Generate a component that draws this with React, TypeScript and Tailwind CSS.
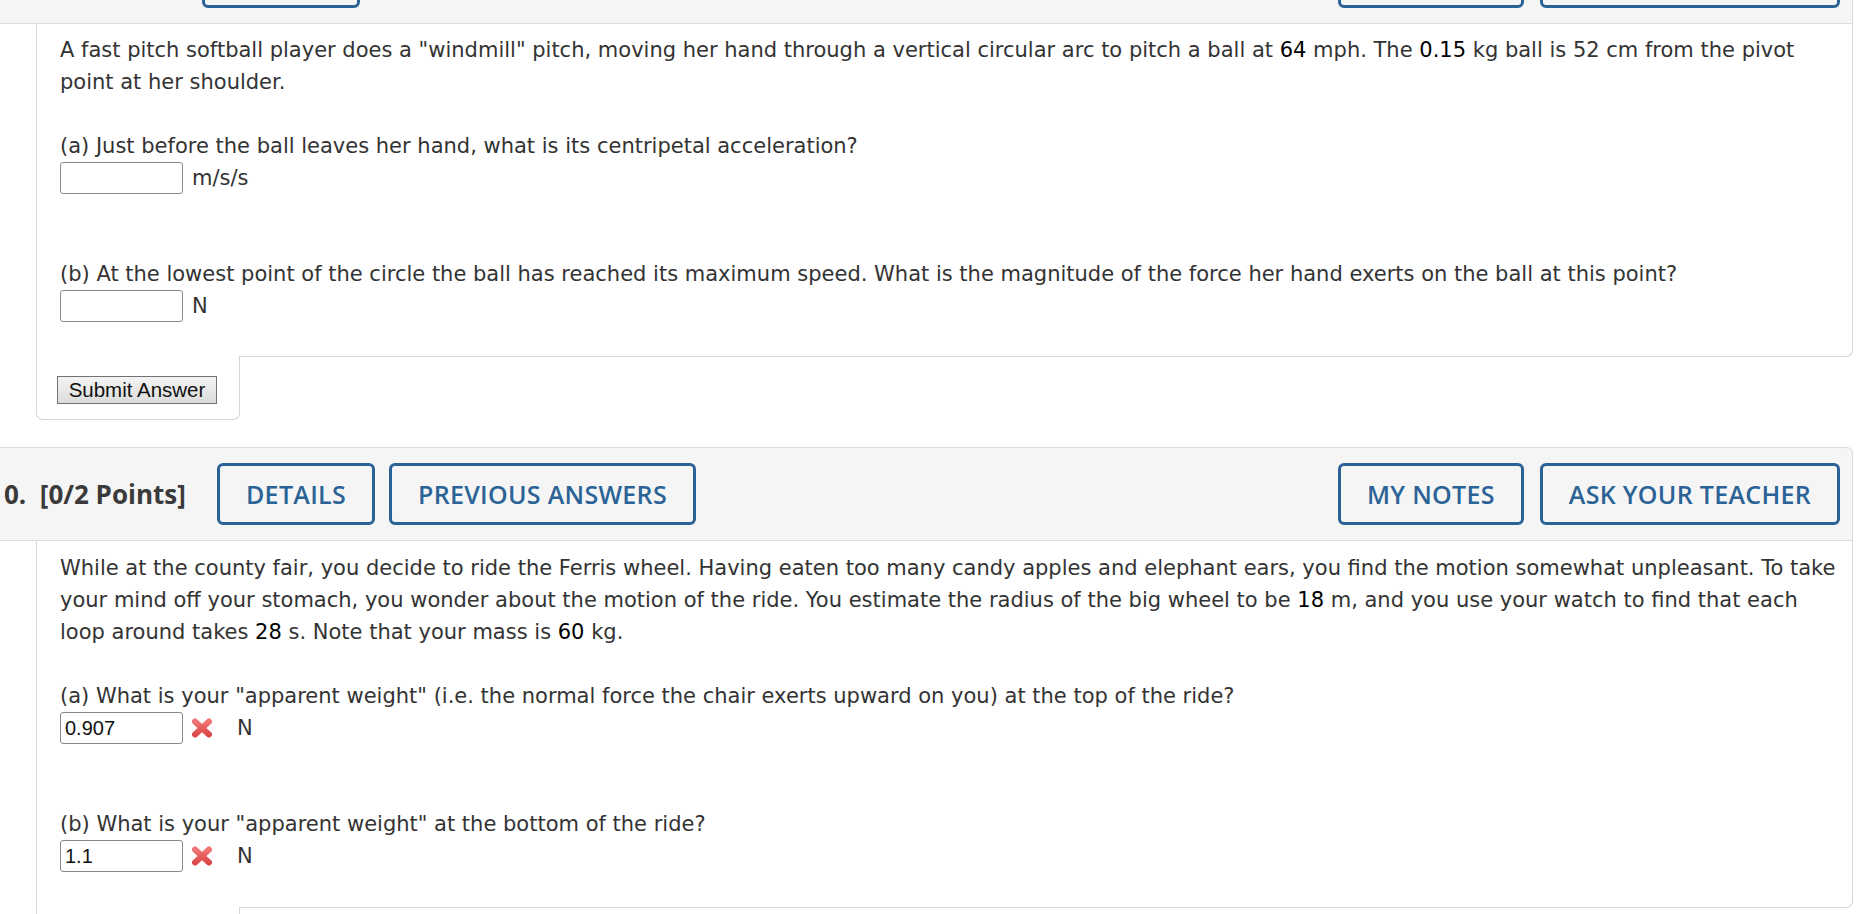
import React from "react";

type HeaderProps = {
  label?: string;
  className?: string;
};

const navBtn =
  "h-[62px] px-[26px] border-[3px] border-[#2c6396] rounded-[6px] text-[#2c6396] font-['Open_Sans',sans-serif] font-semibold text-[25px] leading-none tracking-[0.3px] flex items-center";

const QuestionHeader = ({ label, className }: HeaderProps) => (
  <div
    className={`mr-[13px] h-[94px] bg-[#f5f5f5] border-y border-r border-[#dcdcdc] rounded-tr-[6px] flex items-center pr-[12px] ${className ?? ""}`}
  >
    {label ? (
      <span className="pl-[4px] w-[217px] font-['Open_Sans',sans-serif] font-bold text-[26px] text-[#3a3a3a] whitespace-pre">
        {label}
      </span>
    ) : (
      <span className="w-[202px]" />
    )}
    <div className="flex gap-[14px]">
      <button type="button" className={navBtn}>
        DETAILS
      </button>
      {label && (
        <button type="button" className={navBtn}>
          PREVIOUS ANSWERS
        </button>
      )}
    </div>
    <div className="ml-auto flex gap-[16px]">
      <button type="button" className={navBtn}>
        MY NOTES
      </button>
      <button type="button" className={navBtn}>
        ASK YOUR TEACHER
      </button>
    </div>
  </div>
);

const Num = ({ children }: { children: React.ReactNode }) => (
  <span className="text-black">{children}</span>
);

const WrongMark = () => (
  <svg width="24" height="22" viewBox="0 0 24 22" className="ml-[7px]">
    <defs>
      <linearGradient id="xg" x1="0" y1="0" x2="0" y2="1">
        <stop offset="0" stopColor="#f07676" />
        <stop offset="1" stopColor="#dc4848" />
      </linearGradient>
    </defs>
    <path
      d="M5 4.5 L19 17.5 M19 4.5 L5 17.5"
      stroke="url(#xg)"
      strokeWidth="6"
      strokeLinecap="round"
    />
  </svg>
);

const AnswerInput = ({ value }: { value?: string }) => (
  <input
    readOnly
    value={value ?? ""}
    className="w-[123px] h-[32px] border border-[#8a8a8a] rounded-[3px] px-[4px] bg-white font-['Liberation_Sans',Arial,sans-serif] text-[20px] text-[#111] outline-none"
  />
);

const SubmitTab = () => (
  <div className="relative -mt-px w-[204px] h-[64px] bg-white border-x border-b border-[#d6d6d6] rounded-b-[7px] pl-[20px] pt-[18px]">
    <button
      type="button"
      className="h-[28px] w-[160px] border border-[#727272] bg-gradient-to-b from-[#f4f4f4] to-[#dcdcdc] font-['Liberation_Sans',Arial,sans-serif] text-[20.5px] leading-none text-[#111]"
    >
      Submit Answer
    </button>
  </div>
);

export default function App() {
  return (
    <div className="min-h-screen bg-white font-['DejaVu_Sans',Verdana,sans-serif] text-[21px] leading-[32px] text-[#333] overflow-hidden">
      <QuestionHeader className="-mt-[70px]" />

      <div className="ml-[36px] mr-[13px]">
        <div className="border-x border-b border-[#d6d6d6] rounded-br-[7px] pl-[23px] pr-[12px] pt-[10px] pb-[34px]">
          <p>
            A fast pitch softball player does a "windmill" pitch, moving her hand through a vertical
            circular arc to pitch a ball at <Num>64</Num> mph. The <Num>0.15</Num> kg ball is 52 cm
            from the pivot point at her shoulder.
          </p>
          <p className="mt-[32px]">
            (a) Just before the ball leaves her hand, what is its centripetal acceleration?
          </p>
          <div className="flex items-center h-[32px]">
            <AnswerInput />
            <span className="ml-[9px]">m/s/s</span>
          </div>
          <p className="mt-[64px]">
            (b) At the lowest point of the circle the ball has reached its maximum speed. What is the
            magnitude of the force her hand exerts on the ball at this point?
          </p>
          <div className="flex items-center h-[32px]">
            <AnswerInput />
            <span className="ml-[9px]">N</span>
          </div>
        </div>
        <SubmitTab />
      </div>

      <div className="mt-[27px]">
        <QuestionHeader label="0.  [0/2 Points]" />
        <div className="ml-[36px] mr-[13px]">
          <div className="border-x border-b border-[#d6d6d6] rounded-br-[7px] pl-[23px] pr-[12px] pt-[11px] pb-[35px]">
            <p>
              While at the county fair, you decide to ride the Ferris wheel. Having eaten too many
              candy apples and elephant ears, you find the motion somewhat unpleasant. To take your
              mind off your stomach, you wonder about the motion of the ride. You estimate the radius
              of the big wheel to be <Num>18</Num> m, and you use your watch to find that each loop
              around takes <Num>28</Num> s. Note that your mass is <Num>60</Num> kg.
            </p>
            <p className="mt-[32px]">
              (a) What is your "apparent weight" (i.e. the normal force the chair exerts upward on
              you) at the top of the ride?
            </p>
            <div className="flex items-center h-[32px]">
              <AnswerInput value="0.907" />
              <WrongMark />
              <span className="ml-[23px]">N</span>
            </div>
            <p className="mt-[64px]">(b) What is your "apparent weight" at the bottom of the ride?</p>
            <div className="flex items-center h-[32px]">
              <AnswerInput value="1.1" />
              <WrongMark />
              <span className="ml-[23px]">N</span>
            </div>
          </div>
          <SubmitTab />
        </div>
      </div>
    </div>
  );
}
